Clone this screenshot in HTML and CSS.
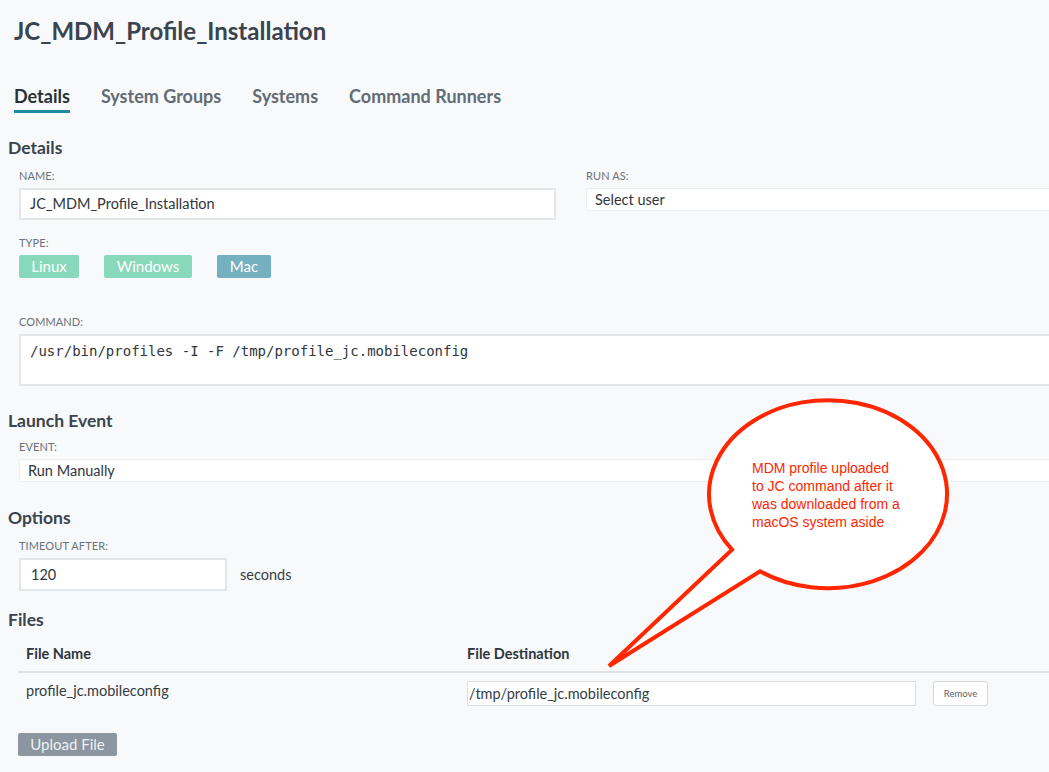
FILE: index.html
```html
<!DOCTYPE html>
<html>
<head>
<meta charset="utf-8">
<link rel="stylesheet" href="styles.css">
</head>
<body>
<div class="page">
  <h1 class="title">JC_MDM_Profile_Installation</h1>
  <nav class="tabs">
    <span class="tab active">Details</span>
    <span class="tab">System Groups</span>
    <span class="tab">Systems</span>
    <span class="tab">Command Runners</span>
  </nav>

  <h2 class="section">Details</h2>
  <div class="row-two">
    <div class="col-name">
      <div class="label">NAME:</div>
      <div class="input name-input">JC_MDM_Profile_Installation</div>
    </div>
    <div class="col-run">
      <div class="label">RUN AS:</div>
      <div class="select">Select user</div>
    </div>
  </div>
  <div class="field type-field">
    <div class="label">TYPE:</div>
    <div class="types">
      <span class="type-btn mint w-linux">Linux</span>
      <span class="type-btn mint w-win">Windows</span>
      <span class="type-btn teal w-mac">Mac</span>
    </div>
  </div>
  <div class="field cmd-field">
    <div class="label">COMMAND:</div>
    <div class="textarea">/usr/bin/profiles -I -F /tmp/profile_jc.mobileconfig</div>
  </div>

  <h2 class="section launch">Launch Event</h2>
  <div class="field">
    <div class="label">EVENT:</div>
    <div class="select wide">Run Manually</div>
  </div>

  <h2 class="section options">Options</h2>
  <div class="field">
    <div class="label">TIMEOUT AFTER:</div>
    <div class="timeout-row">
      <div class="input timeout">120</div>
      <span class="unit">seconds</span>
    </div>
  </div>

  <h2 class="section files">Files</h2>
  <div class="table">
    <div class="thead">
      <div class="th c1">File Name</div>
      <div class="th c2">File Destination</div>
    </div>
    <div class="trow">
      <div class="td c1">profile_jc.mobileconfig</div>
      <div class="td c2">
        <div class="dest">/tmp/profile_jc.mobileconfig</div>
        <span class="remove">Remove</span>
      </div>
    </div>
  </div>
  <div class="upload-wrap"><span class="upload">Upload File</span></div>
</div>

<div class="callout">
  <svg width="360" height="290" viewBox="0 0 360 290" xmlns="http://www.w3.org/2000/svg">
    <path d="M132 151.7 A119 94 0 1 1 160 173.3 L9 268 Z" fill="#ffffff" stroke="#ff2600" stroke-width="4" stroke-linejoin="miter" stroke-miterlimit="10"/>
  </svg>
  <div class="callout-text">MDM profile uploaded<br>to JC command after it<br>was downloaded from a<br>macOS system aside</div>
</div>
</body>
</html>
```
FILE: styles.css
```css
html, body {
  margin: 0;
  padding: 0;
  background: #f8f9fa;
  overflow: hidden;
  width: 1049px;
  height: 772px;
}
body {
  font-family: "Lato", "Noto Sans", sans-serif;
  color: #3b444d;
  position: relative;
}
.page {
  width: 1140px;
  padding: 0 0 0 8px;
}
.title {
  margin: 0;
  padding: 16px 0 0 6px;
  font-size: 24px;
  line-height: 30px;
  font-weight: 700;
  color: #3a444e;
}
.tabs {
  display: flex;
  gap: 31px;
  margin-top: 39px;
  padding-left: 6px;
}
.tab {
  font-size: 18px;
  line-height: 22px;
  font-weight: 700;
  color: #626c75;
  padding-bottom: 3px;
  border-bottom: 3px solid transparent;
}
.tab.active {
  color: #2a3138;
  border-bottom-color: #1f8b9c;
}
.section {
  margin: 0;
  font-size: 17.5px;
  line-height: 22px;
  font-weight: 700;
  color: #3a444e;
}
.tabs + .section { margin-top: 24px; }
.label {
  font-size: 11px;
  line-height: 14px;
  color: #6b7279;
  letter-spacing: 0.1px;
  margin-bottom: 5px;
}
.row-two {
  display: flex;
  padding-left: 11px;
  margin-top: 10px;
}
.col-name { width: 537px; }
.col-run { margin-left: 30px; flex: 1; }
.input {
  background: #fff;
  border: 2px solid #e3e6e9;
  box-sizing: border-box;
  font-size: 14.5px;
  color: #2f363d;
}
.name-input {
  height: 32px;
  line-height: 28px;
  padding-left: 9px;
}
.select {
  background: #fff;
  border: 1px solid #eceef0;
  border-radius: 3px;
  height: 23px;
  line-height: 21px;
  box-sizing: border-box;
  padding-left: 8px;
  font-size: 14.5px;
  color: #2f363d;
}
.field { padding-left: 11px; }
.type-field { margin-top: 16px; }
.types {
  display: flex;
  gap: 25px;
}
.type-btn {
  display: inline-block;
  height: 23px;
  line-height: 23px;
  text-align: center;
  color: #fff;
  font-size: 15px;
  border-radius: 2px;
}
.mint { background: #88d9bc; }
.teal { background: #74b0c0; }
.w-linux { width: 60px; }
.w-win { width: 88px; }
.w-mac { width: 54px; }
.cmd-field { margin-top: 37px; }
.textarea {
  background: #fff;
  border: 2px solid #e3e6e9;
  height: 52px;
  box-sizing: border-box;
  padding: 6px 9px;
  font-family: "DejaVu Sans Mono", monospace;
  font-size: 14px;
  line-height: 18px;
  color: #2f363d;
}
.section.launch { margin-top: 24px; }
.launch + .field { margin-top: 8px; }
.section.options { margin-top: 25px; }
.options + .field { margin-top: 10px; }
.timeout-row {
  display: flex;
  align-items: center;
  gap: 13px;
}
.timeout {
  width: 208px;
  height: 33px;
  line-height: 29px;
  padding-left: 10px;
}
.unit { font-size: 14.5px; color: #353d45; }
.section.files { margin-top: 18px; }
.table {
  margin-top: 12px;
  padding-left: 10px;
}
.thead {
  display: flex;
  border-bottom: 2px solid #dfe2e5;
  height: 28px;
}
.th {
  font-size: 14.5px;
  font-weight: 700;
  color: #2f363d;
  line-height: 22px;
}
.c1 { width: 441px; padding-left: 8px; }
.c2 { flex: 1; }
.trow {
  display: flex;
  padding-top: 8px;
}
.td { font-size: 14.5px; color: #353d45; }
.trow .c1 { line-height: 20px; }
.trow .c2 { display: flex; gap: 17px; }
.dest {
  width: 449px;
  height: 25px;
  box-sizing: border-box;
  border: 1px solid #dcdfe2;
  background: #fff;
  line-height: 23px;
  padding-left: 1px;
  font-size: 14.5px;
  color: #353d45;
}
.remove {
  display: inline-block;
  width: 55px;
  height: 25px;
  box-sizing: border-box;
  border: 1px solid #d5d8db;
  border-radius: 3px;
  background: #fff;
  text-align: center;
  line-height: 23px;
  font-size: 9.5px;
  color: #5a6168;
}
.upload-wrap {
  margin-top: 27px;
  padding-left: 10px;
}
.upload {
  display: inline-block;
  width: 99px;
  height: 23px;
  line-height: 23px;
  text-align: center;
  background: #8b96a0;
  color: #eef1f3;
  font-size: 15px;
  border-radius: 2px;
}
.callout {
  position: absolute;
  left: 600px;
  top: 398px;
  width: 360px;
  height: 290px;
}
.callout svg { position: absolute; left: 0; top: 0; }
.callout-text {
  position: absolute;
  left: 152px;
  top: 61px;
  font-family: "Liberation Sans", Arial, sans-serif;
  font-size: 14px;
  line-height: 18px;
  color: #ff2600;
}
```
